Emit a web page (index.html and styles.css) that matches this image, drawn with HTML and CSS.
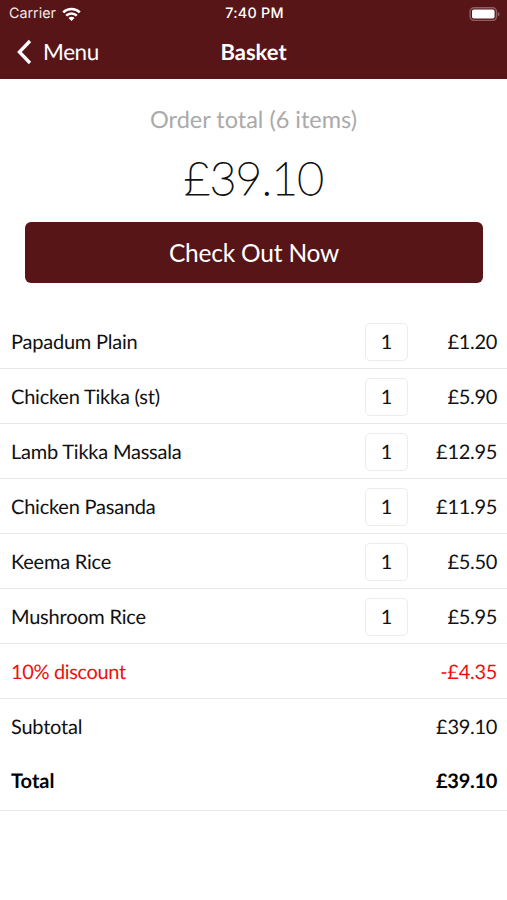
FILE: index.html
```html
<!DOCTYPE html>
<html lang="en">
<head>
<meta charset="utf-8">
<title>Basket</title>
<link rel="stylesheet" href="styles.css">
</head>
<body>
<header class="top">
  <div class="status">
    <div class="carrier">Carrier
      <svg class="wifi" width="19" height="15" viewBox="0 0 19 15" fill="none" stroke="#fff" stroke-width="2.5"><path d="M1.2 5.4a11.8 11.8 0 0 1 16.6 0M4.2 8.7a7.4 7.4 0 0 1 10.6 0"/><path d="M9.5 14 6.5 11.1a4.2 4.2 0 0 1 6 0Z" fill="#fff" stroke="none"/></svg>
    </div>
    <div class="clock">7:40 PM</div>
    <svg class="battery" width="31" height="14" viewBox="0 0 31 14"><rect x="1.1" y=".8" width="26.4" height="12.6" rx="3.8" fill="none" stroke="#8f6062" stroke-width="1.4"/><rect x="3" y="2.6" width="22.6" height="9" rx="1.8" fill="#fff"/><path d="M28.8 5q1.7.6 1.7 2.2t-1.7 2.2Z" fill="#8f6062"/></svg>
  </div>
  <nav class="nav">
    <a class="back"><svg width="16" height="26" viewBox="0 0 16 26" fill="none" stroke="#fff" stroke-width="3.3"><path d="M14 2 3.4 13 14 24"/></svg><span>Menu</span></a>
    <h1>Basket</h1>
  </nav>
</header>
<main>
  <section class="summary">
    <p class="label">Order total (6 items)</p>
    <p class="amount">£39.10</p>
    <button class="checkout">Check Out Now</button>
  </section>
  <ul class="items">
    <li><span>Papadum Plain</span><span class="qty">1</span><span class="price">£1.20</span></li>
    <li><span>Chicken Tikka (st)</span><span class="qty">1</span><span class="price">£5.90</span></li>
    <li><span>Lamb Tikka Massala</span><span class="qty">1</span><span class="price">£12.95</span></li>
    <li><span>Chicken Pasanda</span><span class="qty">1</span><span class="price">£11.95</span></li>
    <li><span>Keema Rice</span><span class="qty">1</span><span class="price">£5.50</span></li>
    <li><span>Mushroom Rice</span><span class="qty">1</span><span class="price">£5.95</span></li>
    <li class="discount"><span>10% discount</span><span class="price">-£4.35</span></li>
    <li class="subtotal"><span>Subtotal</span><span class="price">£39.10</span></li>
    <li class="total"><span>Total</span><span class="price">£39.10</span></li>
  </ul>
</main>
</body>
</html>
```
FILE: styles.css
```css
* { box-sizing: border-box; margin: 0; padding: 0; }
body { background: #fff; color: #111; font-family: Lato, sans-serif; font-size: 20px; text-rendering: geometricPrecision; }
.top { height: 79px; background: #571518; color: #fff; }
.status { display: grid; grid-template-columns: 1fr auto 1fr; align-items: center; height: 26px; padding: 0 7px 0 9px; font: 14.3px/26px Inter, sans-serif; }
.carrier { display: flex; align-items: center; gap: 6px; color: #f3e8e8; line-height: 28px; }
.clock { font-weight: 500; letter-spacing: .25px; line-height: 28px; }
.battery { justify-self: end; }
.nav { display: grid; grid-template-columns: 1fr auto 1fr; align-items: center; height: 51px; padding: 0 16px; }
.back { display: flex; align-items: center; gap: 11px; font-size: 22.5px; letter-spacing: -.4px; }
h1 { font-size: 22px; font-weight: 700; }
.summary { padding: 26px 25px 0; text-align: center; height: 235px; }
.label { font-size: 23.5px; line-height: 30px; color: #aaa; }
.amount { font-size: 46px; line-height: 58px; font-weight: 200; letter-spacing: -.8px; margin-top: 14px; -webkit-text-stroke: 1.1px #111; }
.checkout { display: block; width: 458px; height: 61px; margin-top: 15px; padding-bottom: 1px; border: 0; border-radius: 6px; background: #571518; color: #fff; font: 24.5px Lato, sans-serif; letter-spacing: -.2px; }
.items { list-style: none; letter-spacing: -.22px; }
.items li { display: grid; grid-template-columns: 1fr 43px 89px; align-items: center; height: 55px; padding: 2px 10px 0 11px; border-bottom: 1px solid #e6e6e6; }
.qty { height: 38px; border: 1px solid #ececec; border-radius: 5px; line-height: 37px; text-align: center; }
.price { grid-column: 3; text-align: right; letter-spacing: -.3px; }
.items .discount { color: #f00f0f; letter-spacing: -.35px; }
.items .subtotal { border-bottom: 0; padding-top: 0; }
.items .total { color: #000; font-weight: 700; height: 57px; padding: 0 10px 3px 11px; letter-spacing: 0; }
.total .price { letter-spacing: -.3px; }
```
